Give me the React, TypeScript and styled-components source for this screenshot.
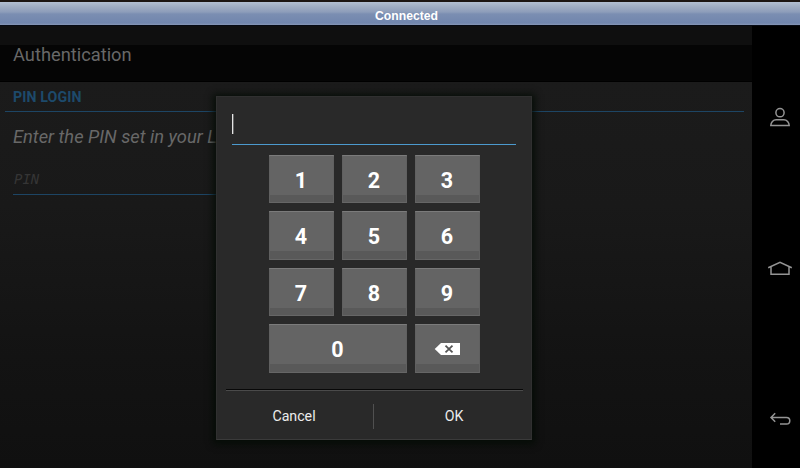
import React from "react";
import styled, { createGlobalStyle } from "styled-components";

const GlobalStyle = createGlobalStyle`
  * { box-sizing: border-box; }
  body { margin: 0; background: #000; overflow: hidden; font-family: Roboto, sans-serif; }
`;

const Window = styled.div`
  position: relative;
  display: flex;
  flex-direction: column;
  width: 800px;
  height: 468px;
  overflow: hidden;
  background: #000;
`;

const TitleBar = styled.header`
  height: 26px;
  border-top: 2px solid #1c1613;
  border-bottom: 1px solid #060a14;
  background: linear-gradient(#b3c0d2 0, #a2b0c5 4px, #8d9dba 10px, #7b8eb2 12px, #7186ad 21px, #8797b5 23px);
  color: #fff;
  font: bold 12.2px/28px "Liberation Sans", Arial, sans-serif;
  text-align: center;
  padding-left: 13px;
`;

const Device = styled.div`
  display: flex;
  flex: 1;
`;

const Screen = styled.main`
  width: 752px;
  background: linear-gradient(#1b1b1b 56px, #191919 180px, #131313 330px, #101010 442px);
`;

const StatusStrip = styled.div`
  height: 19px;
  background: #0f0f0f;
`;

const ActionBar = styled.div`
  height: 37px;
  padding-left: 13px;
  background: #050505;
  border-bottom: 1px solid #000;
  color: #686868;
  font-size: 18.3px;
  line-height: 20px;
`;

const SectionTitle = styled.h2`
  height: 30px;
  margin: 0 8px 0 5px;
  padding-left: 8px;
  border-bottom: 1px solid #1d4564;
  color: #1d4a6b;
  font-size: 14.2px;
  font-weight: 700;
  letter-spacing: 0.1px;
  line-height: 30px;
`;

const Hint = styled.p`
  width: 204px;
  height: 26px;
  margin: 12px 0 0 13px;
  overflow: hidden;
  white-space: nowrap;
  color: #686868;
  font-size: 18.3px;
  font-style: italic;
  line-height: 26px;
`;

const PinField = styled.div`
  width: 240px;
  height: 45px;
  margin-left: 13px;
  padding-left: 1px;
  border-bottom: 1px solid #1d4564;
  color: #353535;
  font: italic 14px/59px "DejaVu Sans Mono", monospace;
`;

const SideBar = styled.nav`
  display: flex;
  flex-direction: column;
  align-items: center;
  justify-content: space-between;
  width: 48px;
  padding: 79px 0 37px 8px;
  background: #000;
`;

const NavIcon = styled.svg`
  display: block;
  width: 26px;
  height: 24px;
  fill: none;
  stroke: #949494;
  stroke-width: 1.5;
`;

const Dialog = styled.section`
  position: absolute;
  left: 216px;
  top: 96px;
  width: 316px;
  height: 344px;
  display: flex;
  flex-direction: column;
  background: #292929;
  border: 1px solid #303030;
  border-bottom-color: #3a3a3a;
  box-shadow: 0 1px 7px 3px rgba(4, 12, 5, 0.85);
`;

const Entry = styled.div`
  height: 48px;
  margin: 0 15px;
  padding-top: 17px;
  border-bottom: 1px solid #4c9ace;
`;

const Caret = styled.div`
  width: 1px;
  height: 20px;
  background: #e4e4e4;
  box-shadow: 1px 0 #686868;
`;

const Keypad = styled.div`
  display: grid;
  grid-template-columns: repeat(3, 65px);
  grid-auto-rows: 48.5px;
  gap: 8px;
  margin: 9.6px 0 0 52px;
`;

const Key = styled.button<{ $wide?: boolean }>`
  grid-column: span ${({ $wide }) => ($wide ? 2 : 1)};
  display: flex;
  align-items: center;
  justify-content: center;
  padding: 3px 1px 0 0;
  border: 0;
  border-radius: 1px;
  background: linear-gradient(#646464 0 40px, #595959 40px);
  box-shadow: inset 0 1px #7b7b7b, inset 0 -1px #666, inset 1px 0 #606060, inset -1px 0 #606060;
  color: #fff;
  font: 700 21.5px/1 Roboto, sans-serif;
`;

const BackspaceIcon = styled.svg`
  width: 27px;
  height: 14px;
  margin-top: -2px;
`;

const Actions = styled.footer`
  display: flex;
  align-items: center;
  height: 50px;
  margin: auto 8px 0 9px;
  border-top: 1px solid #080808;
  box-shadow: inset 0 1px #4a4a4a;
`;

const Action = styled.button<{ $width: number; $shift: number }>`
  width: ${({ $width }) => $width}px;
  padding: 3px ${({ $shift }) => Math.max(0, -$shift)}px 0 ${({ $shift }) => Math.max(0, $shift)}px;
  border: 0;
  background: none;
  color: #ececec;
  font: 400 14.2px/20px Roboto, sans-serif;
  text-align: center;
`;

const Divider = styled.div`
  width: 1px;
  height: 25px;
  margin-top: 3px;
  background: #505050;
`;

const digits = ["1", "2", "3", "4", "5", "6", "7", "8", "9"];

export default function App() {
  return (
    <>
      <GlobalStyle />
      <Window>
        <TitleBar>Connected</TitleBar>
        <Device>
          <Screen>
            <StatusStrip />
            <ActionBar>Authentication</ActionBar>
            <SectionTitle>PIN LOGIN</SectionTitle>
            <Hint>Enter the PIN set in your L</Hint>
            <PinField>PIN</PinField>
          </Screen>
          <SideBar>
            <NavIcon viewBox="0 0 26 24">
              <circle cx="13" cy="7.7" r="4.1" />
              <path d="M3.8 20.5c0-3.2 2.4-5.8 5.4-5.8h7.6c3 0 5.4 2.6 5.4 5.8z" />
            </NavIcon>
            <NavIcon viewBox="0 0 26 24">
              <path d="M1.2 11.8 13 6.3 24.8 11.8M4 10.8v7.5h18v-7.5" />
            </NavIcon>
            <NavIcon viewBox="0 0 26 24">
              <path d="M8.2 6.2 4 10.5l4.2 4.3M4 10.5h15.5a3.3 3.3 0 0 1 0 6.6H13" />
            </NavIcon>
          </SideBar>
        </Device>
        <Dialog role="dialog">
          <Entry>
            <Caret />
          </Entry>
          <Keypad>
            {digits.map((digit) => (
              <Key key={digit}>{digit}</Key>
            ))}
            <Key $wide>0</Key>
            <Key aria-label="Delete">
              <BackspaceIcon viewBox="0 0 27 14">
                <path d="M0.7 7 7 1h19v12H7z" fill="#fff" />
                <path d="m11.5 3.6 7 6.8m0-6.8-7 6.8" stroke="#555" strokeWidth="1.8" />
              </BackspaceIcon>
            </Key>
          </Keypad>
          <Actions>
            <Action $width={147} $shift={-11}>Cancel</Action>
            <Divider />
            <Action $width={149} $shift={11}>OK</Action>
          </Actions>
        </Dialog>
      </Window>
    </>
  );
}
